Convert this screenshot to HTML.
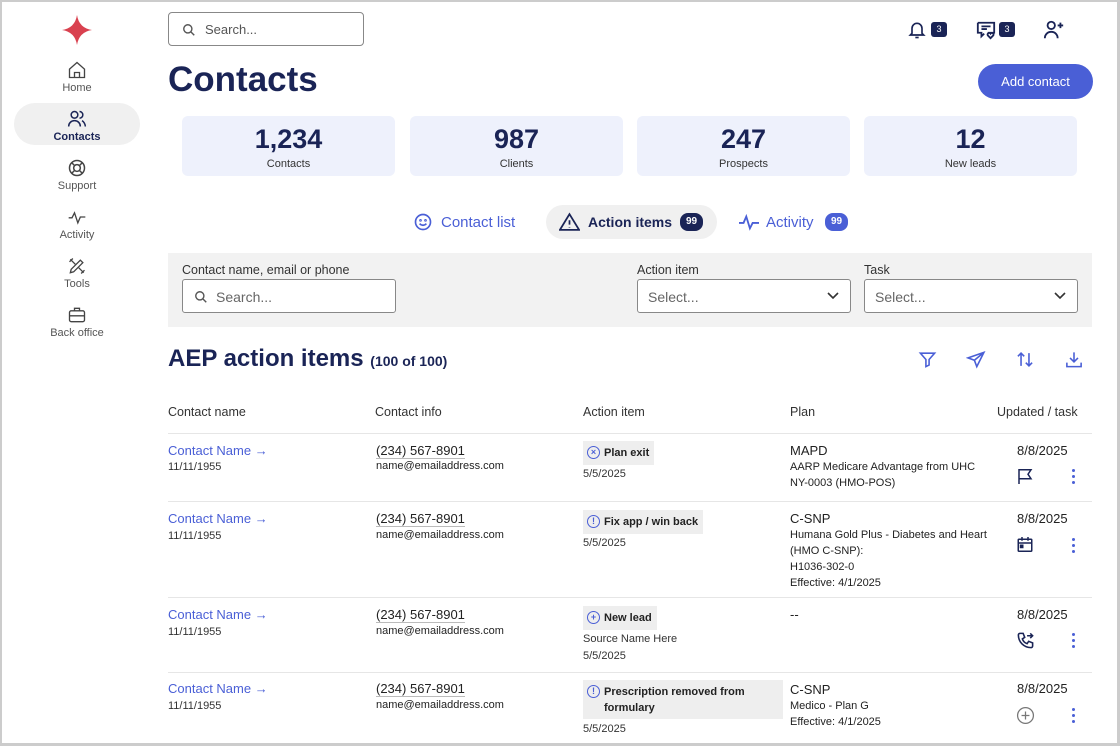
<!DOCTYPE html>
<html><head><meta charset="utf-8"><style>
*{box-sizing:border-box;margin:0;padding:0}
body{width:1120px;height:746px;overflow:hidden;background:#fff;font-family:"Liberation Sans",sans-serif;color:#222;position:relative}
.frame{position:absolute;left:0;top:0;width:1120px;height:746px;border:2px solid #ccc;border-right-width:3px}
.a{position:absolute}
.nav{position:absolute;left:14px;width:126px;text-align:center;font-size:11px;color:#555}
.nav svg{display:block;margin:0 auto 2px}
.card{position:absolute;top:116px;width:213px;height:60px;background:#eef1fc;border-radius:6px;text-align:center;color:#1a2456}
.card b{display:block;font-size:27px;margin-top:8px;line-height:30px}
.card span{font-size:11px;color:#333}
.inp{position:absolute;height:34px;background:#fff;border:1px solid #888;border-radius:3px;font-size:14px;color:#666}
.lbl{position:absolute;top:263px;font-size:12.5px;color:#333}
.th{position:absolute;top:405px;font-size:12.5px;color:#333}
.hr{position:absolute;left:168px;width:924px;height:1px;background:#e6e6e6}
.cn{position:absolute;font-size:13px;color:#4a5fd6}
.dob{position:absolute;font-size:11px;color:#333}
.ph{position:absolute;font-size:13px;color:#222;border-bottom:1px solid #bbb;line-height:15px}
.em{position:absolute;font-size:11px;color:#222}
.tag{position:absolute;background:#eee;font-size:11px;font-weight:bold;color:#222;padding:4px 5px 4px 21px;line-height:16px}
.tag i{position:absolute;left:4px;top:5px;width:13px;height:13px;border:1.3px solid #4a5fd6;border-radius:50%;font-style:normal;font-size:9px;color:#4a5fd6;text-align:center;line-height:10px}
.pl{position:absolute;font-size:11px;color:#222;line-height:16px}
.pl b{font-weight:normal;font-size:13px;display:block;line-height:17px}
.dt{position:absolute;left:1017px;font-size:13px;color:#222}
.dots{position:absolute;left:1072px;width:4px}
.dots i{display:block;width:3px;height:3px;border-radius:50%;background:#4a5fd6;margin-bottom:3px}
</style></head><body>
<div class="frame"></div>
<svg class="a" style="left:62px;top:15px" width="30" height="30" viewBox="0 0 30 30"><path d="M15 0 Q17 13 30 15 Q17 17 15 30 Q13 17 0 15 Q13 13 15 0Z" fill="#d9414f"/></svg>
<div class="nav" style="top:60px"><svg width="20" height="20" viewBox="0 0 24 24" fill="none" stroke="#444" stroke-width="1.6"><path d="M3 11L12 3l9 8v10H3z"/><path d="M9 21v-6h6v6"/></svg>Home</div>
<div class="a" style="left:14px;top:103px;width:126px;height:42px;background:#f0f0f0;border-radius:21px"></div>
<div class="nav" style="top:109px;color:#1a2456;font-weight:bold"><svg width="20" height="20" viewBox="0 0 24 24" fill="none" stroke="#1a2456" stroke-width="1.8"><circle cx="9" cy="7" r="4"/><path d="M2 21c0-4 3-7 7-7s7 3 7 7"/><path d="M15 3a4 4 0 010 8M18 14c2 1 4 4 4 7"/></svg>Contacts</div>
<div class="nav" style="top:158px"><svg width="20" height="20" viewBox="0 0 24 24" fill="none" stroke="#444" stroke-width="1.8"><circle cx="12" cy="12" r="9"/><circle cx="12" cy="12" r="4"/><path d="M6 6l3 3M18 6l-3 3M6 18l3-3M18 18l-3-3"/></svg>Support</div>
<div class="nav" style="top:207px"><svg width="20" height="20" viewBox="0 0 24 24" fill="none" stroke="#444" stroke-width="1.6"><path d="M2 13h4l3-6 4 12 3-7h6"/></svg>Activity</div>
<div class="nav" style="top:256px"><svg width="20" height="20" viewBox="0 0 24 24" fill="none" stroke="#444" stroke-width="1.6"><path d="M4 20l4-1 11-11-3-3L5 16z"/><path d="M4 4l6 6M14 14l6 6M3 7l4-4M17 21l4-4"/></svg>Tools</div>
<div class="nav" style="top:305px"><svg width="20" height="20" viewBox="0 0 24 24" fill="none" stroke="#444" stroke-width="1.6"><rect x="3" y="7" width="18" height="13" rx="2"/><path d="M9 7V4h6v3M3 13h18"/></svg>Back office</div>

<div class="inp" style="left:168px;top:12px;width:196px;border-radius:4px"><svg class="a" style="left:13px;top:10px" width="14" height="14" viewBox="0 0 24 24" fill="none" stroke="#555" stroke-width="2.4"><circle cx="10" cy="10" r="7"/><path d="M15 15l6 6"/></svg><span class="a" style="left:36px;top:9px;font-size:13px;color:#555">Search...</span></div>
<svg class="a" style="left:907px;top:20px" width="20" height="20" viewBox="0 0 24 24" fill="none" stroke="#1a2456" stroke-width="2"><path d="M6 16V10a6 6 0 0112 0v6l2 2H4z"/><path d="M10 21h4"/></svg>
<div class="a" style="left:931px;top:22px;width:16px;height:15px;background:#1a2456;border-radius:3px;color:#fff;font-size:9px;text-align:center;line-height:15px">3</div>
<svg class="a" style="left:975px;top:20px" width="22" height="20" viewBox="0 0 24 22" fill="none" stroke="#1a2456" stroke-width="2"><path d="M3 3h18v11h-7M3 3v11h4v4l3-3"/><path d="M7 7h10M7 10h6"/><path d="M17 20l-3-3a1.5 1.5 0 013-2 1.5 1.5 0 013 2z"/></svg>
<div class="a" style="left:999px;top:22px;width:16px;height:15px;background:#1a2456;border-radius:3px;color:#fff;font-size:9px;text-align:center;line-height:15px">3</div>
<svg class="a" style="left:1043px;top:19px" width="22" height="22" viewBox="0 0 24 24" fill="none" stroke="#1a2456" stroke-width="2"><circle cx="9" cy="7" r="4"/><path d="M2 21c0-4 3-7 7-7s7 3 7 7M19 4v6M16 7h6"/></svg>

<div class="a" style="left:168px;top:60px;font-size:35px;font-weight:bold;color:#1a2456">Contacts</div>
<div class="a" style="left:978px;top:64px;width:115px;height:35px;background:#4a5fd6;border-radius:18px;color:#fff;font-size:13px;text-align:center;line-height:35px">Add contact</div>

<div class="card" style="left:182px"><b>1,234</b><span>Contacts</span></div>
<div class="card" style="left:410px"><b>987</b><span>Clients</span></div>
<div class="card" style="left:637px"><b>247</b><span>Prospects</span></div>
<div class="card" style="left:864px"><b>12</b><span>New leads</span></div>

<svg class="a" style="left:413px;top:212px" width="20" height="20" viewBox="0 0 24 24" fill="none" stroke="#4a5fd6" stroke-width="2"><circle cx="12" cy="12" r="9"/><path d="M8 14c2 2.5 6 2.5 8 0"/><circle cx="9" cy="10" r=".6"/><circle cx="15" cy="10" r=".6"/></svg>
<div class="a" style="left:441px;top:214px;font-size:15px;color:#4a5fd6">Contact list</div>
<div class="a" style="left:546px;top:205px;width:171px;height:34px;background:#f0f0f0;border-radius:17px"></div>
<svg class="a" style="left:559px;top:212px" width="21" height="20" viewBox="0 0 24 22" fill="none" stroke="#1a2456" stroke-width="2"><path d="M12 2L1 20h22z"/><path d="M12 9v5M12 17v.5"/></svg>
<div class="a" style="left:588px;top:214px;font-size:14px;font-weight:bold;color:#1a2456">Action items</div>
<div class="a" style="left:680px;top:213px;width:23px;height:18px;background:#1a2456;border-radius:8px;color:#fff;font-size:10px;font-weight:bold;text-align:center;line-height:18px">99</div>
<svg class="a" style="left:738px;top:212px" width="22" height="20" viewBox="0 0 24 22" fill="none" stroke="#4a5fd6" stroke-width="2"><path d="M1 12h5l3-7 4 13 3-6h7"/></svg>
<div class="a" style="left:766px;top:214px;font-size:15px;color:#4a5fd6">Activity</div>
<div class="a" style="left:825px;top:213px;width:23px;height:18px;background:#4a5fd6;border-radius:8px;color:#fff;font-size:10px;font-weight:bold;text-align:center;line-height:18px">99</div>

<div class="a" style="left:168px;top:253px;width:924px;height:74px;background:#f2f2f2"></div>
<div class="lbl" style="left:182px">Contact name, email or phone</div>
<div class="lbl" style="left:637px">Action item</div>
<div class="lbl" style="left:864px">Task</div>
<div class="inp" style="left:182px;top:279px;width:214px"><svg class="a" style="left:11px;top:10px" width="14" height="14" viewBox="0 0 24 24" fill="none" stroke="#555" stroke-width="2.4"><circle cx="10" cy="10" r="7"/><path d="M15 15l6 6"/></svg><span class="a" style="left:33px;top:9px">Search...</span></div>
<div class="inp" style="left:637px;top:279px;width:214px"><span class="a" style="left:10px;top:9px">Select...</span><svg class="a" style="right:11px;top:12px" width="12" height="8" viewBox="0 0 12 8" fill="none" stroke="#333" stroke-width="1.6"><path d="M1 1l5 5 5-5"/></svg></div>
<div class="inp" style="left:864px;top:279px;width:214px"><span class="a" style="left:10px;top:9px">Select...</span><svg class="a" style="right:11px;top:12px" width="12" height="8" viewBox="0 0 12 8" fill="none" stroke="#333" stroke-width="1.6"><path d="M1 1l5 5 5-5"/></svg></div>

<div class="a" style="left:168px;top:345px;font-size:24px;font-weight:bold;color:#1a2456">AEP action items <span style="font-size:14px">(100 of 100)</span></div>
<svg class="a" style="left:918px;top:350px" width="19" height="19" viewBox="0 0 24 24" fill="none" stroke="#4a5fd6" stroke-width="2"><path d="M3 4h18l-7 8v7l-4 2v-9z"/></svg>
<svg class="a" style="left:966px;top:350px" width="20" height="19" viewBox="0 0 24 24" fill="none" stroke="#4a5fd6" stroke-width="2"><path d="M22 3L2 10l8 3 3 8z M10 13l12-10"/></svg>
<svg class="a" style="left:1015px;top:350px" width="20" height="19" viewBox="0 0 24 24" fill="none" stroke="#4a5fd6" stroke-width="2"><path d="M7 20V4M3 8l4-4 4 4M17 4v16M13 16l4 4 4-4"/></svg>
<svg class="a" style="left:1064px;top:350px" width="20" height="19" viewBox="0 0 24 24" fill="none" stroke="#4a5fd6" stroke-width="2"><path d="M12 3v12M7 10l5 5 5-5M3 16v5h18v-5"/></svg>

<div class="th" style="left:168px">Contact name</div>
<div class="th" style="left:375px">Contact info</div>
<div class="th" style="left:583px">Action item</div>
<div class="th" style="left:790px">Plan</div>
<div class="th" style="left:997px">Updated / task</div>
<div class="hr" style="top:433px"></div>
<div class="hr" style="top:501px"></div>
<div class="hr" style="top:597px"></div>
<div class="hr" style="top:672px"></div>
<div class="a" style="left:0;top:743px;width:1120px;height:1px;background:#ccc"></div>

<div class="cn" style="left:168px;top:443px">Contact Name →</div><div class="dob" style="left:168px;top:461px">11/11/1955</div>
<div class="ph" style="left:376px;top:443px">(234) 567-8901</div><div class="em" style="left:376px;top:460px">name@emailaddress.com</div>
<div class="tag" style="left:583px;top:441px"><i>×</i>Plan exit</div><div class="dob" style="left:583px;top:468px">5/5/2025</div>
<div class="pl" style="left:790px;top:442px"><b>MAPD</b>AARP Medicare Advantage from UHC<br>NY-0003 (HMO-POS)</div>
<div class="dt" style="top:443px">8/8/2025</div>
<svg class="a" style="left:1016px;top:467px" width="18" height="19" viewBox="0 0 24 24" fill="none" stroke="#1a2456" stroke-width="2"><path d="M4 22V3h16l-4 6 4 6H4"/></svg>
<div class="dots" style="top:469px"><i></i><i></i><i></i></div>

<div class="cn" style="left:168px;top:511px">Contact Name →</div><div class="dob" style="left:168px;top:530px">11/11/1955</div>
<div class="ph" style="left:376px;top:511px">(234) 567-8901</div><div class="em" style="left:376px;top:529px">name@emailaddress.com</div>
<div class="tag" style="left:583px;top:510px"><i>!</i>Fix app / win back</div><div class="dob" style="left:583px;top:537px">5/5/2025</div>
<div class="pl" style="left:790px;top:510px"><b>C-SNP</b>Humana Gold Plus - Diabetes and Heart<br>(HMO C-SNP):<br>H1036-302-0<br>Effective: 4/1/2025</div>
<div class="dt" style="top:511px">8/8/2025</div>
<svg class="a" style="left:1016px;top:535px" width="18" height="19" viewBox="0 0 24 24" fill="none" stroke="#1a2456" stroke-width="2"><rect x="3" y="5" width="18" height="16" rx="1"/><path d="M3 10h18M8 2v5M16 2v5"/><rect x="6" y="13" width="3" height="3" fill="#1a2456"/></svg>
<div class="dots" style="top:538px"><i></i><i></i><i></i></div>

<div class="cn" style="left:168px;top:607px">Contact Name →</div><div class="dob" style="left:168px;top:626px">11/11/1955</div>
<div class="ph" style="left:376px;top:607px">(234) 567-8901</div><div class="em" style="left:376px;top:625px">name@emailaddress.com</div>
<div class="tag" style="left:583px;top:606px"><i>+</i>New lead</div><div class="dob" style="left:583px;top:633px">Source Name Here</div><div class="dob" style="left:583px;top:650px">5/5/2025</div>
<div class="pl" style="left:790px;top:606px"><b>--</b></div>
<div class="dt" style="top:607px">8/8/2025</div>
<svg class="a" style="left:1016px;top:631px" width="19" height="19" viewBox="0 0 24 24" fill="none" stroke="#1a2456" stroke-width="2"><path d="M5 3h4l2 5-3 2c1 3 3 5 6 6l2-3 5 2v4c0 1-1 2-2 2C10 21 3 14 3 5c0-1 1-2 2-2z"/><path d="M14 6h7M18 3l3 3-3 3"/></svg>
<div class="dots" style="top:633px"><i></i><i></i><i></i></div>

<div class="cn" style="left:168px;top:681px">Contact Name →</div><div class="dob" style="left:168px;top:700px">11/11/1955</div>
<div class="ph" style="left:376px;top:681px">(234) 567-8901</div><div class="em" style="left:376px;top:699px">name@emailaddress.com</div>
<div class="tag" style="left:583px;top:680px;width:200px;height:39px"><i>!</i>Prescription removed from<br>formulary</div><div class="dob" style="left:583px;top:723px">5/5/2025</div>
<div class="pl" style="left:790px;top:681px"><b>C-SNP</b>Medico - Plan G<br>Effective: 4/1/2025</div>
<div class="dt" style="top:681px">8/8/2025</div>
<svg class="a" style="left:1016px;top:706px" width="19" height="19" viewBox="0 0 24 24" fill="none" stroke="#777" stroke-width="1.6"><circle cx="12" cy="12" r="10"/><path d="M12 7v10M7 12h10"/></svg>
<div class="dots" style="top:708px"><i></i><i></i><i></i></div>
</body></html>
